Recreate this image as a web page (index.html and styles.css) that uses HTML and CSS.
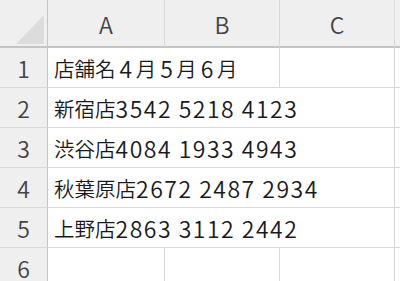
FILE: index.html
```html
<!DOCTYPE html>
<html lang="ja">
<head>
<meta charset="utf-8">
<link rel="stylesheet" href="styles.css">
</head>
<body>
<div class="sheet">
  <div class="corner"><div class="tri"></div></div>
  <div class="colh">A</div>
  <div class="colh">B</div>
  <div class="colh">C</div>
  <div class="colh last"></div>

  <div class="rowh">1</div>
  <div class="cell span2">店舗名<span class="num d">4</span>月<span class="num d">5</span>月<span class="num d">6</span>月</div>
  <div class="cell"></div>
  <div class="cell"></div>

  <div class="rowh">2</div>
  <div class="cell span3">新宿店<span class="num">3542 5218 4123</span></div>
  <div class="cell"></div>

  <div class="rowh">3</div>
  <div class="cell span3">渋谷店<span class="num">4084 1933 4943</span></div>
  <div class="cell"></div>

  <div class="rowh">4</div>
  <div class="cell span3">秋葉原店<span class="num">2672 2487 2934</span></div>
  <div class="cell"></div>

  <div class="rowh">5</div>
  <div class="cell span3">上野店<span class="num">2863 3112 2442</span></div>
  <div class="cell"></div>

  <div class="rowh">6</div>
  <div class="cell"></div>
  <div class="cell"></div>
  <div class="cell"></div>
  <div class="cell"></div>
</div>
</body>
</html>
```
FILE: styles.css
```css
html, body {
  margin: 0;
  padding: 0;
  background: #ffffff;
  overflow: hidden;
}
.sheet {
  display: grid;
  grid-template-columns: 48px 117px 115px 115px 1fr;
  grid-template-rows: 48px repeat(6, 40px);
  width: 400px;
  font-family: "Noto Sans CJK JP", sans-serif;
  color: #1a1a1a;
}
.corner {
  background: #efefef;
  border-right: 1px solid #c4c4c4;
  border-bottom: 2px solid #c4c4c4;
  box-sizing: border-box;
  position: relative;
}
.tri {
  position: absolute;
  right: 3px;
  bottom: 2px;
  width: 0;
  height: 0;
  border-left: 28px solid transparent;
  border-bottom: 29px solid #dcdcdc;
}
.colh {
  background: #efefef;
  border-right: 1px solid #d9d9d9;
  border-bottom: 2px solid #c4c4c4;
  box-sizing: border-box;
  display: flex;
  align-items: center;
  justify-content: center;
  font-size: 23px;
  font-weight: 350;
  color: #444;
  padding-top: 2px;
}
.colh.last {
  border-right: none;
}
.rowh {
  background: #efefef;
  border-right: 1px solid #c4c4c4;
  border-bottom: 1px solid #d9d9d9;
  box-sizing: border-box;
  display: flex;
  align-items: center;
  justify-content: center;
  font-size: 23px;
  font-weight: 350;
  color: #444;
}
.cell {
  border-right: 1px solid #d9d9d9;
  border-bottom: 1px solid #d9d9d9;
  box-sizing: border-box;
  display: flex;
  align-items: center;
  padding-left: 6px;
  font-size: 20.5px;
  font-weight: 350;
  white-space: pre;
  overflow: hidden;
}
.span2 { grid-column: span 2; }
.span3 { grid-column: span 3; }
.num {
  font-size: 23px;
  letter-spacing: 1.5px;
}
.d {
  padding: 0 2px 0 4px;
}
```
